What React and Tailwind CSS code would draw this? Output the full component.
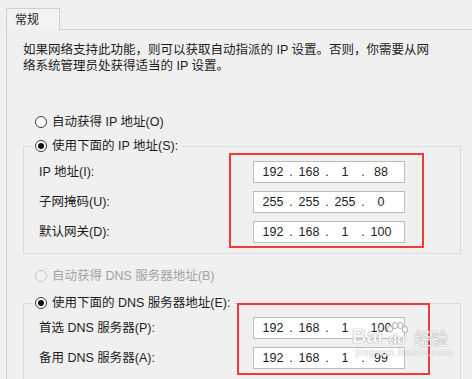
import React, { Fragment } from "react";

const FONT = "font-['Liberation_Sans','Noto_Sans_CJK_SC',sans-serif]";

function Radio({ checked, disabled }) {
  return (
    <span
      className={
        disabled
          ? "flex h-[12px] w-[12px] shrink-0 items-center justify-center rounded-full border border-[#c6c6c6] bg-[#f3f3f3]"
          : "flex h-[12px] w-[12px] shrink-0 items-center justify-center rounded-full border border-[#3a3a3a] bg-white"
      }
    >
      {checked && <span className="h-[6px] w-[6px] rounded-full bg-[#111]" />}
    </span>
  );
}

function IpBox({ parts }) {
  return (
    <div className="flex h-[22px] w-[152px] items-center border border-[#bdbdbd] bg-white pl-[4px] text-[12.5px] text-[#1e1e1e]">
      {parts.map((p, i) => (
        <Fragment key={i}>
          {i > 0 && <span className="w-[6px] text-center">.</span>}
          <span className="w-[30px] text-center">{p}</span>
        </Fragment>
      ))}
    </div>
  );
}

function Row({ label, parts }) {
  return (
    <div className="flex items-center">
      <span className="w-[214px]">{label}</span>
      <IpBox parts={parts} />
    </div>
  );
}

function GroupHeader({ children }) {
  return (
    <div className="-mt-[11px] ml-[9px] flex h-[20px] w-fit items-center gap-[5px] bg-[#f0f0f0] pl-[2px] pr-[4px]">
      <Radio checked />
      <span>{children}</span>
    </div>
  );
}

function Watermark() {
  return (
    <div className="pointer-events-none absolute left-[352px] top-[322px] flex flex-col items-start">
      <div className="flex items-end gap-[2px] font-['Liberation_Sans',sans-serif] text-[20px] font-bold leading-none text-[#f8f8f8] [text-shadow:0_0_1px_#9a9a9a,0_0_1px_#9a9a9a]">
        <span>Bai</span>
        <span className="relative flex h-[24px] w-[24px] items-end justify-center">
          <svg className="absolute left-0 top-0" width="24" height="22" viewBox="0 0 24 22">
            <g fill="#f8f8f8" stroke="#a8a8a8" strokeWidth="0.9">
              <ellipse cx="5" cy="7" rx="2.6" ry="3.2" />
              <ellipse cx="10" cy="3.5" rx="2.6" ry="3.2" />
              <ellipse cx="15.5" cy="3.5" rx="2.6" ry="3.2" />
              <ellipse cx="20" cy="7.5" rx="2.6" ry="3.2" />
            </g>
          </svg>
          <span className="relative text-[14px]">du</span>
        </span>
        <span className="ml-[3px] font-['Noto_Sans_CJK_SC',sans-serif] text-[17px] font-normal">经验</span>
      </div>
      <div className="mt-[2px] pl-[4px] font-['Liberation_Sans',sans-serif] text-[10px] leading-none tracking-[1px] text-[#f8f8f8] [text-shadow:0_0_1px_#a0a0a0]">
        jingyan.baidu.com
      </div>
    </div>
  );
}

export default function App() {
  return (
    <div
      className={`relative h-[379px] w-[472px] overflow-hidden bg-[#f0f0f0] pl-[6px] pt-[8px] text-[12.5px] leading-[16px] text-[#1c1c1c] ${FONT}`}
    >
      {/* Tab */}
      <div className="relative z-10 -mb-px flex h-[22px] w-[54px] items-center border-l border-r border-t border-[#cfcfcf] bg-[#f3f3f3] pl-[8px] text-[12px]">
        常规
      </div>

      {/* Panel */}
      <div className="h-[400px] border-l border-t border-[#d2d2d2] pl-[16px] pt-[12px]">
        <p className="whitespace-nowrap">
          如果网络支持此功能，则可以获取自动指派的 IP 设置。否则，你需要从网
          <br />
          络系统管理员处获得适当的 IP 设置。
        </p>

        <div className="ml-[12px] mt-[38px] flex h-[20px] items-center gap-[5px]">
          <Radio />
          <span>自动获得 IP 地址(O)</span>
        </div>

        {/* Group 1 */}
        <div className="relative mt-[14px] w-[438px] border border-[#dadada] pb-[10px]">
          <GroupHeader>使用下面的 IP 地址(S):</GroupHeader>
          <div className="mt-[5px] flex flex-col gap-[8px] pl-[15px]">
            <Row label="IP 地址(I):" parts={["192", "168", "1", "88"]} />
            <Row label="子网掩码(U):" parts={["255", "255", "255", "0"]} />
            <Row label="默认网关(D):" parts={["192", "168", "1", "100"]} />
          </div>
          <div className="pointer-events-none absolute left-[205px] top-[6px] h-[95px] w-[195px] border-2 border-[#f23a3a]" />
        </div>

        <div className="ml-[12px] mt-[12px] flex h-[20px] items-center gap-[5px] text-[#a3a3a3]">
          <Radio disabled />
          <span>自动获得 DNS 服务器地址(B)</span>
        </div>

        {/* Group 2 */}
        <div className="relative mt-[17px] w-[438px] border border-[#dadada] pb-[20px]">
          <GroupHeader>使用下面的 DNS 服务器地址(E):</GroupHeader>
          <div className="mt-[4px] flex flex-col gap-[8px] pl-[15px]">
            <Row label="首选 DNS 服务器(P):" parts={["192", "168", "1", "100"]} />
            <Row label="备用 DNS 服务器(A):" parts={["192", "168", "1", "99"]} />
          </div>
          <div className="pointer-events-none absolute -top-[1px] left-[213px] h-[72px] w-[193px] border-2 border-[#f23a3a]" />
        </div>
      </div>

      <Watermark />
    </div>
  );
}
